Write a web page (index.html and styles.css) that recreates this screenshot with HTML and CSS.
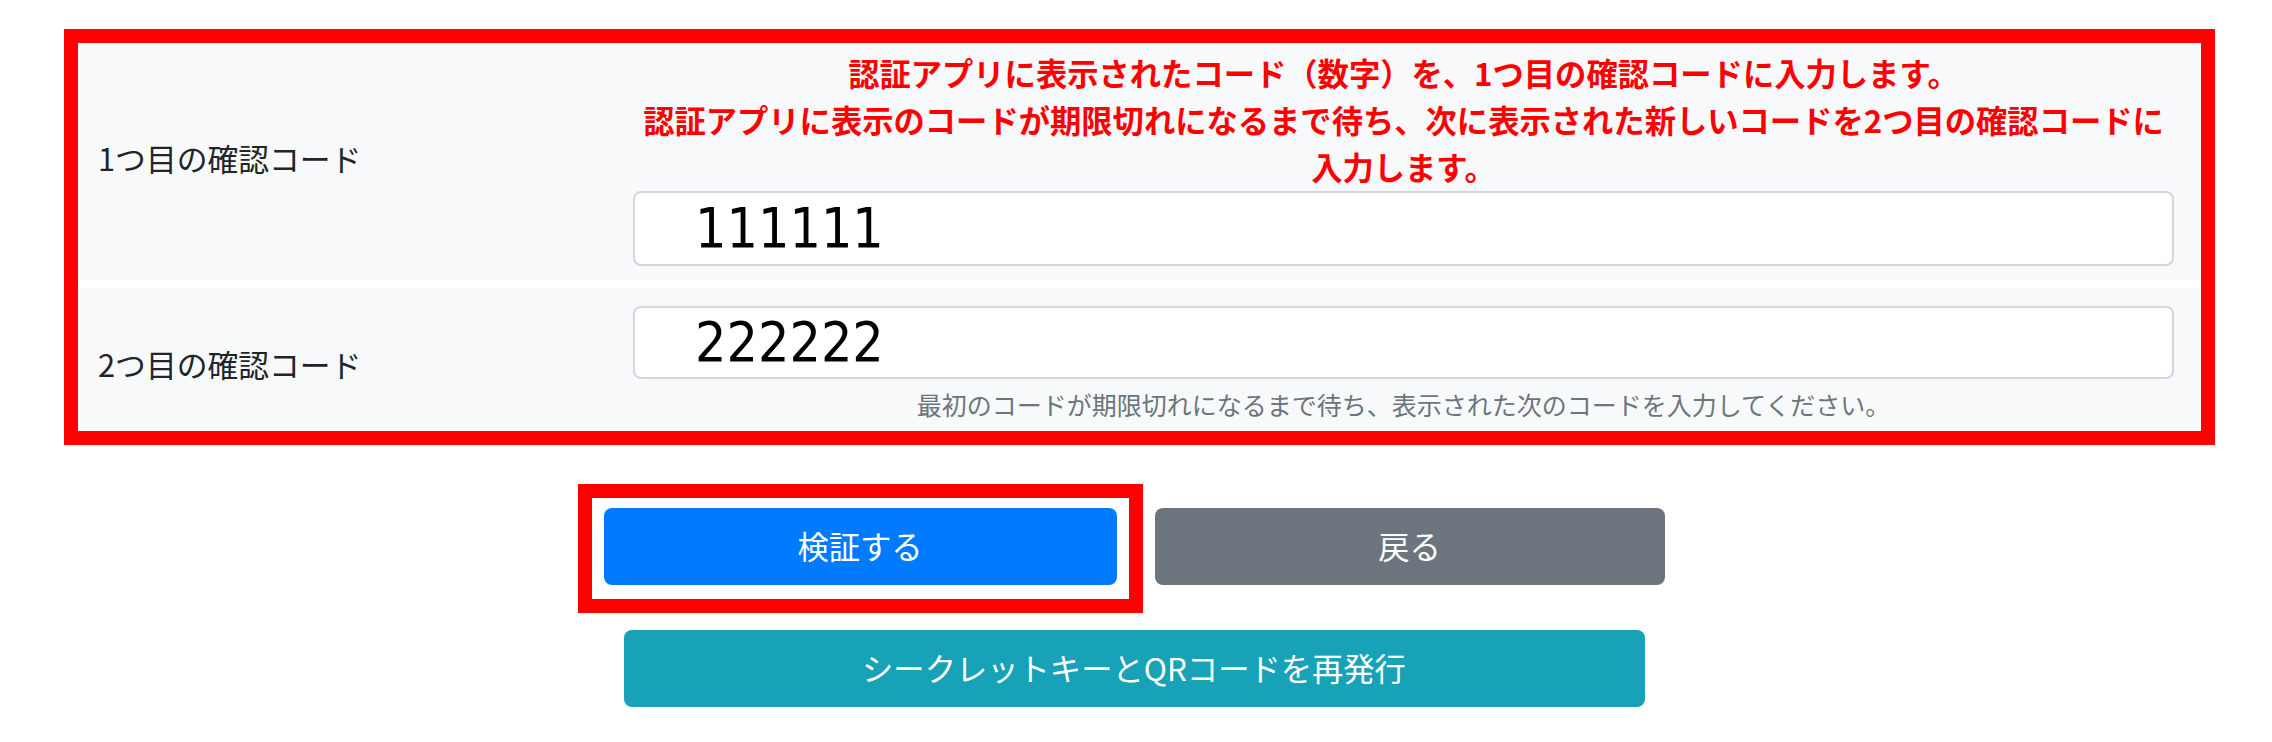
FILE: index.html
```html
<!DOCTYPE html>
<html lang="ja">
<head>
    <meta charset="UTF-8">
    <meta name="viewport" content="width=device-width, initial-scale=1.0">
    <title>二段階認証の設定</title>
    <link rel="stylesheet" href="styles.css">
</head>
<body>
    <form class="verify-form">
        <div class="form-row first-row">
            <label class="row-label" for="code1">1つ目の確認コード</label>
            <div class="row-field">
                <p class="notice">認証アプリに表示されたコード（数字）を、1つ目の確認コードに入力します。<br>認証アプリに表示のコードが期限切れになるまで待ち、次に表示された新しいコードを2つ目の確認コードに入力します。</p>
                <input type="text" id="code1" class="code-input" value="111111">
            </div>
        </div>
        <div class="form-row second-row">
            <label class="row-label" for="code2">2つ目の確認コード</label>
            <div class="row-field">
                <input type="text" id="code2" class="code-input" value="222222">
                <small class="help-text">最初のコードが期限切れになるまで待ち、表示された次のコードを入力してください。</small>
            </div>
        </div>
    </form>

    <div class="actions">
        <div class="btn-pair">
            <button type="button" class="btn btn-primary marked">検証する</button>
            <button type="button" class="btn btn-secondary">戻る</button>
        </div>
        <button type="button" class="btn btn-info btn-wide">シークレットキーとQRコードを再発行</button>
    </div>
</body>
</html>
```

FILE: styles.css
```css
:root {
    --mark-color: #ff0000;
    --row-bg: #f8f9fa;
    --text-color: #212529;
    --muted-color: #6c757d;
    --input-border: #d2d7dc;
    --primary-color: #007bff;
    --secondary-color: #6c757d;
    --info-color: #17a2b8;
}

* {
    box-sizing: border-box;
    margin: 0;
    padding: 0;
}

body {
    font-family: "Noto Sans CJK JP", "Noto Sans", sans-serif;
    font-size: 31.3px;
    line-height: 1.5;
    color: var(--text-color);
    background: white;
    padding: 29px 57px 0 64px;
}

.verify-form {
    border: 14px solid var(--mark-color);
    background: white;
}

.form-row {
    display: grid;
    grid-template-columns: 535px 1fr;
    align-items: center;
    background-color: var(--row-bg);
    padding: 7px 27px 14px 20px;
}

.second-row {
    margin-top: 8px;
    padding-top: 18px;
    padding-bottom: 8px;
}

.row-label {
    font-size: 30.8px;
}

.row-field {
    display: flex;
    flex-direction: column;
}

.notice {
    color: var(--mark-color);
    font-weight: 700;
    text-align: center;
}

.code-input {
    height: 75px;
    width: 100%;
    padding: 0 60px;
    border: 2px solid var(--input-border);
    border-radius: 8px;
    background: white;
    color: #000;
    font-family: "DejaVu Sans Condensed", "DejaVu Sans", sans-serif;
    font-stretch: condensed;
    font-size: 55px;
    outline: none;
}

.second-row .code-input {
    height: 73px;
}

.help-text {
    margin-top: 7px;
    font-size: 25px;
    color: var(--muted-color);
    text-align: center;
}

.actions {
    display: flex;
    flex-direction: column;
    align-items: center;
    margin-top: 63px;
    padding-right: 11px;
}

.btn-pair {
    display: flex;
    gap: 38px;
}

.btn {
    font-family: inherit;
    font-size: 31.3px;
    line-height: 1.5;
    color: white;
    border: 1px solid transparent;
    border-radius: 8px;
    padding: 14px 20px;
    cursor: pointer;
}

.btn-primary {
    width: 513px;
    background-color: var(--primary-color);
}

.btn-secondary {
    width: 510px;
    background-color: var(--secondary-color);
}

.btn-info {
    background-color: var(--info-color);
}

.btn-wide {
    width: 1021px;
    margin-top: 45px;
}

/* 説明用の赤枠 */
.marked {
    position: relative;
}

.marked::after {
    content: "";
    position: absolute;
    top: -25px;
    left: -27px;
    right: -27px;
    bottom: -29px;
    border: 14px solid var(--mark-color);
    pointer-events: none;
}
```
